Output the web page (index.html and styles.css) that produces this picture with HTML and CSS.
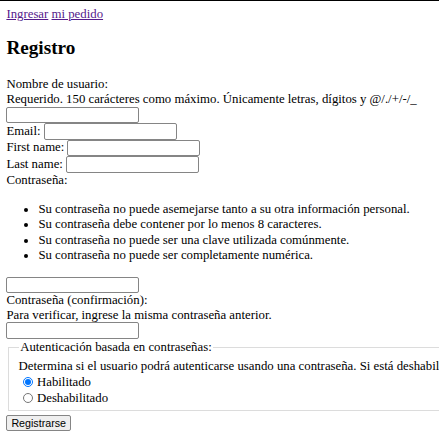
FILE: index.html
```html
<!DOCTYPE html>
<html lang="es">
<head>
<meta charset="utf-8">
<title>Registro</title>
<link rel="stylesheet" href="styles.css">
</head>
<body class="page">
<div class="topline"></div>
<div class="content">
  <nav class="nav"><a href="#" class="link">Ingresar</a> <a href="#" class="link">mi pedido</a></nav>
  <h2 class="title">Registro</h2>
  <form class="form">
    <div class="block">
      <label class="lbl">Nombre de usuario:</label>
      <div class="help">Requerido. 150 carácteres como máximo. Únicamente letras, dígitos y @/./+/-/_</div>
      <input type="text" class="field field-block">
    </div>
    <div class="row"><label class="lbl">Email:</label><input type="email" class="field"></div>
    <div class="row"><label class="lbl">First name:</label><input type="text" class="field"></div>
    <div class="row"><label class="lbl">Last name:</label><input type="text" class="field"></div>
    <div class="block">
      <label class="lbl">Contraseña:</label>
      <ul class="rules">
        <li>Su contraseña no puede asemejarse tanto a su otra información personal.</li>
        <li>Su contraseña debe contener por lo menos 8 caracteres.</li>
        <li>Su contraseña no puede ser una clave utilizada comúnmente.</li>
        <li>Su contraseña no puede ser completamente numérica.</li>
      </ul>
      <input type="password" class="field field-block">
    </div>
    <div class="block">
      <label class="lbl">Contraseña (confirmación):</label>
      <div class="help">Para verificar, ingrese la misma contraseña anterior.</div>
      <input type="password" class="field field-block">
    </div>
    <fieldset class="group">
      <legend class="legend">Autenticación basada en contraseñas:</legend>
      <div class="help nowrap">Determina si el usuario podrá autenticarse usando una contraseña. Si está deshabilitado, todavía podría autenticarse usando otros métodos, como Single Sign-On o LDAP.</div>
      <div class="radios">
        <div class="radio-row"><label class="radio"><input type="radio" name="usable" class="radio-input" checked>Habilitado</label></div>
        <div class="radio-row"><label class="radio"><input type="radio" name="usable" class="radio-input">Deshabilitado</label></div>
      </div>
    </fieldset>
    <button type="button" class="btn">Registrarse</button>
  </form>
</div>
</body>
</html>
```
FILE: styles.css
```css
html { overflow: hidden; }
.page {
  margin: 0;
  font-family: "Liberation Serif", "Times New Roman", serif;
  font-size: 12.8px;
  line-height: 14.7px;
  color: #000;
  background: #fff;
}
.topline { height: 1px; background: #000; }
.content { padding: 6.4px 6.4px 6px 6.4px; }
.nav { line-height: 14.7px; }
.link { color: #551a8b; }
.title {
  font-size: 19.2px;
  font-weight: bold;
  line-height: 22px;
  margin: 15px 0 18px 0;
}
.lbl { display: block; }
.row {
  display: flex;
  align-items: center;
  height: 16.5px;
  gap: 3px;
}
.row .lbl { display: inline; }
.nowrap { white-space: nowrap; }
.field {
  box-sizing: border-box;
  width: 133px;
  height: 16.5px;
  margin: 0;
  padding: 1px 2px;
  border: 1px solid #858585;
  border-radius: 2px;
  font-size: 10.7px;
  background: #fff;
}
.field-block { display: block; }
.rules {
  margin: 14.5px 0 12.5px 0;
  padding-left: 32px;
  line-height: 15.6px;
}
.group {
  margin: 1px 1.6px 0 1.6px;
  padding: 3px 9.6px 4px 9.6px;
  border: 1px solid #dcdcdc;
  border-right: none;
  min-width: 0;
  width: 620px;
}
.legend { padding: 0 1.6px; }
.group .help { margin-top: 1px; }
.radios { padding-top: 0.5px; }
.radio-row { line-height: 16px; height: 16px; }
.radio {
  display: inline-flex;
  align-items: center;
}
.radio-input {
  width: 10.4px;
  height: 10.4px;
  margin: 0 4px 0 4px;
  accent-color: #0075ff;
}
.btn {
  display: block;
  margin-top: 4px;
  box-sizing: border-box;
  height: 16px;
  font-family: Arial, "Liberation Sans", sans-serif;
  font-size: 10.7px;
  line-height: 12px;
  padding: 0 4px;
  border: 1px solid #858585;
  border-radius: 2px;
  background: #efefef;
  color: #000;
}
```
